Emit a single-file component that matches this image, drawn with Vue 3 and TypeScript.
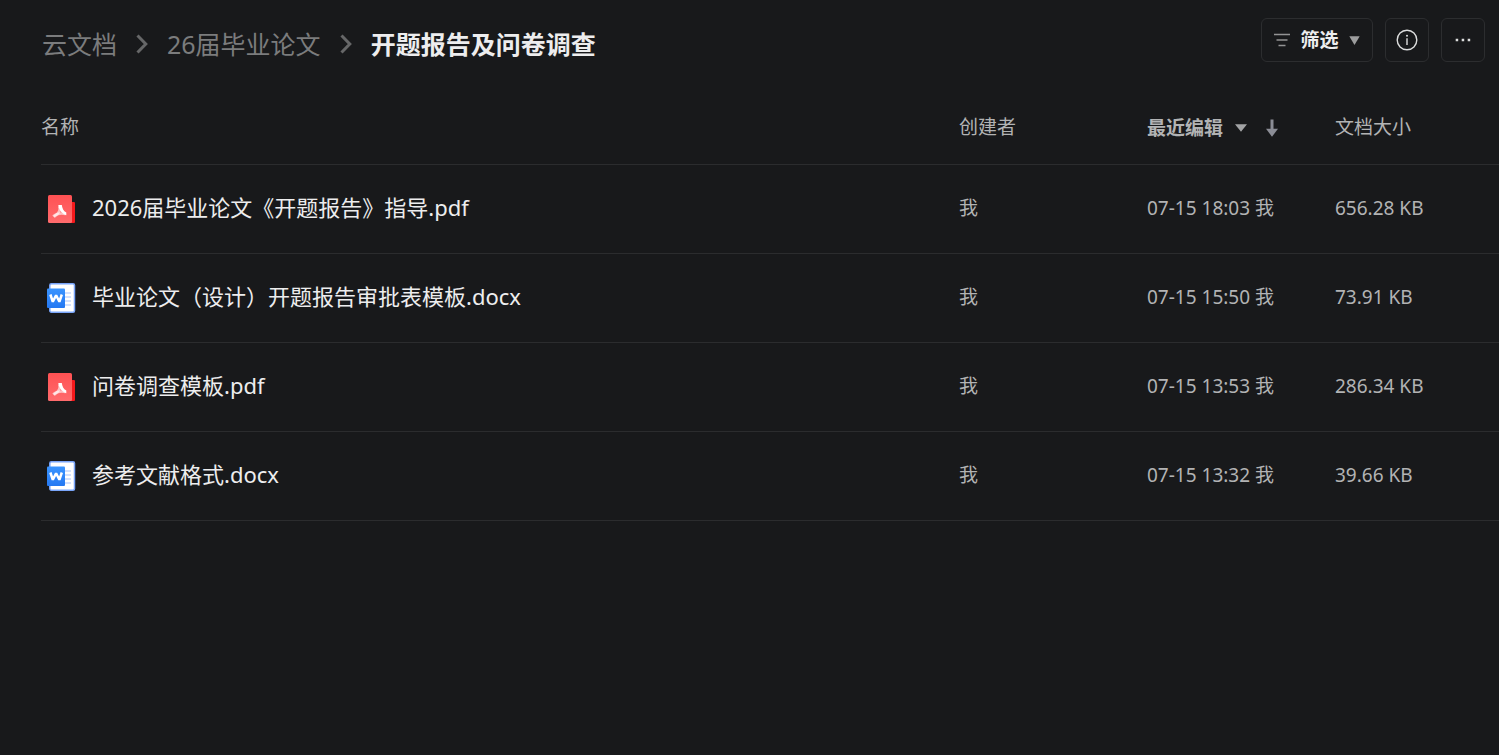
<script setup lang="ts">
interface CloudFile {
  name: string
  kind: 'pdf' | 'docx'
  creator: string
  edited: string
  size: string
}

const files: CloudFile[] = [
  { name: '2026届毕业论文《开题报告》指导.pdf', kind: 'pdf', creator: '我', edited: '07-15 18:03 我', size: '656.28 KB' },
  { name: '毕业论文（设计）开题报告审批表模板.docx', kind: 'docx', creator: '我', edited: '07-15 15:50 我', size: '73.91 KB' },
  { name: '问卷调查模板.pdf', kind: 'pdf', creator: '我', edited: '07-15 13:53 我', size: '286.34 KB' },
  { name: '参考文献格式.docx', kind: 'docx', creator: '我', edited: '07-15 13:32 我', size: '39.66 KB' },
]
</script>

<template>
  <main class="drive">
    <svg class="defs" width="0" height="0" aria-hidden="true">
      <defs>
        <linearGradient id="pdf-body" x1="0" y1="0" x2="0" y2="1">
          <stop offset="0" stop-color="#ff5153" />
          <stop offset="1" stop-color="#ff6b6d" />
        </linearGradient>
        <linearGradient id="word-body" x1="0" y1="0" x2="0" y2="1">
          <stop offset="0" stop-color="#3a94ff" />
          <stop offset="1" stop-color="#2478f2" />
        </linearGradient>
      </defs>
    </svg>

    <header class="topbar">
      <nav class="crumbs" aria-label="路径">
        <a href="#">云文档</a>
        <svg class="chevron" width="12" height="20" viewBox="0 0 12 20" aria-hidden="true">
          <path d="M1.5 1.5 9.8 10 1.5 18.5" />
        </svg>
        <a href="#">26届毕业论文</a>
        <svg class="chevron" width="12" height="20" viewBox="0 0 12 20" aria-hidden="true">
          <path d="M1.5 1.5 9.8 10 1.5 18.5" />
        </svg>
        <h1>开题报告及问卷调查</h1>
      </nav>
      <div class="actions">
        <button type="button" class="btn filter">
          <svg width="16" height="14" viewBox="0 0 16 14" aria-hidden="true">
            <path d="M0 1.5h16M2.5 7h11M4.5 12.5h7" fill="none" stroke="#929394" stroke-width="1.4" />
          </svg>
          <span>筛选</span>
          <svg width="11" height="10" viewBox="0 0 11 10" aria-hidden="true">
            <path d="M0.3 1.2h10.4L5.5 10z" fill="#9c9d9e" />
          </svg>
        </button>
        <button type="button" class="btn" aria-label="详情">
          <svg width="22" height="22" viewBox="0 0 22 22" aria-hidden="true">
            <circle cx="11" cy="11" r="9.8" fill="none" stroke="#dcdddd" stroke-width="1.4" />
            <path d="M11 9.3v6.7" stroke="#dcdddd" stroke-width="1.4" />
            <circle cx="11" cy="6.7" r="1" fill="#dcdddd" />
          </svg>
        </button>
        <button type="button" class="btn" aria-label="更多">
          <svg width="16" height="4" viewBox="0 0 16 4" aria-hidden="true">
            <path d="M.7.8h2.5v2.5H.7zM6.7.8h2.5v2.5H6.7zM12.7.8h2.5v2.5h-2.5z" fill="#dcdddd" />
          </svg>
        </button>
      </div>
    </header>

    <table class="files">
      <colgroup>
        <col />
        <col class="col-creator" />
        <col class="col-edited" />
        <col class="col-size" />
      </colgroup>
      <thead>
        <tr>
          <th scope="col">名称</th>
          <th scope="col">创建者</th>
          <th scope="col" aria-sort="descending">
            <button type="button" class="sort">
              <span>最近编辑</span>
              <svg class="caret" width="12" height="8" viewBox="0 0 12 8" aria-hidden="true">
                <path d="M0 .3h12L6 7.7z" fill="#a2a3a5" />
              </svg>
              <svg width="12" height="18" viewBox="0 0 12 18" aria-hidden="true">
                <path d="M4.5 .5h3v9.3H12L6 17.8 0 9.8h4.5z" fill="#8b8d96" />
              </svg>
            </button>
          </th>
          <th scope="col">文档大小</th>
        </tr>
      </thead>
      <tbody>
        <tr v-for="file in files" :key="file.name">
          <td>
            <a href="#" class="file">
              <svg v-if="file.kind === 'pdf'" width="30" height="30" viewBox="0 0 30 30" aria-hidden="true">
                <rect x="20" y="8" width="8" height="21" rx="1" fill="#f5191c" />
                <rect x="1" y="1" width="24" height="28" rx="1.5" fill="url(#pdf-body)" />
                <path d="M12.2 12.3C13.6 15.6 12 19.6 7 22.8" fill="none" stroke="#fff" stroke-opacity=".6" stroke-width="2.6" />
                <path d="M6.2 22.4C9 19.8 13.5 18.9 18.8 20" fill="none" stroke="#fff" stroke-opacity=".6" stroke-width="2.6" />
                <path d="M11.3 11h3.5c.4 3.400 1.700 5.800 4.500 7.600v2.600c-4.600-1.700-7.200-5-8-10.200z" fill="#fff" />
              </svg>
              <svg v-else width="30" height="30" viewBox="0 0 30 30" aria-hidden="true">
                <rect x="2.800" y=".8" width="24.700" height="28.400" rx="1.5" fill="#fff" stroke="#79a5fa" stroke-width="1.5" />
                <path d="M18 10h6M18 14h6M18 18h6M18 22h6" stroke="#c6d8fd" stroke-width="1.4" />
                <rect x="0" y="5.500" width="18" height="19.500" rx="1" fill="url(#word-body)" />
                <path d="M3.400 11.500l2.400 7.300 3.300-6.600 3.300 6.600 2.400-7.300" fill="none" stroke="#fff" stroke-width="2.500" stroke-linejoin="bevel" />
              </svg>
              <span>{{ file.name }}</span>
            </a>
          </td>
          <td class="meta">{{ file.creator }}</td>
          <td class="meta">{{ file.edited }}</td>
          <td class="meta">{{ file.size }}</td>
        </tr>
      </tbody>
    </table>
  </main>
</template>

<style>
body {
  margin: 0;
  background: #18191b;
}
</style>

<style scoped>
.drive {
  min-height: 100vh;
  box-sizing: border-box;
  padding-left: 41px;
  background: #18191b;
  color: #b2b3b4;
  font-family: "Noto Sans", "Noto Sans CJK SC", sans-serif;
  font-size: 19px;
  line-height: 28px;
}

.defs {
  position: absolute;
}

.topbar {
  display: flex;
  justify-content: space-between;
  align-items: flex-start;
  padding: 18px 14px 0 1px;
}

.crumbs {
  display: flex;
  align-items: center;
  height: 52px;
  font-size: 25px;
  line-height: 36px;
  white-space: nowrap;
}

.crumbs a {
  color: #7b7c7d;
  text-decoration: none;
}

.crumbs h1 {
  margin: 0;
  color: #ededee;
  font-size: 25px;
  font-weight: 700;
}

.chevron {
  margin: 0 19px;
  fill: none;
  stroke: #666768;
  stroke-width: 3;
}

.actions {
  display: flex;
  gap: 12px;
}

.btn {
  display: flex;
  align-items: center;
  justify-content: center;
  box-sizing: border-box;
  width: 44px;
  height: 44px;
  padding: 0;
  border: 1px solid #2c2d2f;
  border-radius: 6px;
  background: transparent;
  color: #ededee;
  font: inherit;
  font-weight: 700;
}

.filter {
  gap: 10px;
  width: 112px;
}

.files {
  width: 100%;
  margin-top: 20px;
  border-collapse: collapse;
  table-layout: fixed;
}

.col-creator,
.col-edited {
  width: 188px;
}

.col-size {
  width: 164px;
}

th,
td {
  padding: 0;
  border-bottom: 1px solid #2b2c2e;
  text-align: left;
  font-weight: 400;
  white-space: nowrap;
}

th {
  height: 74px;
}

td {
  box-sizing: border-box;
  height: 89px;
}

.meta {
  padding-bottom: 2px;
}

.sort {
  display: flex;
  align-items: center;
  padding: 2px 0 0;
  border: 0;
  background: transparent;
  color: inherit;
  font: inherit;
  font-weight: 700;
}

.caret {
  margin: 0 19px 0 12px;
}

.file {
  display: flex;
  align-items: center;
  gap: 15px;
  padding-left: 6px;
  color: #ededee;
  font-size: 22px;
  line-height: 32px;
  text-decoration: none;
}

.file span {
  padding-bottom: 4px;
}
</style>
